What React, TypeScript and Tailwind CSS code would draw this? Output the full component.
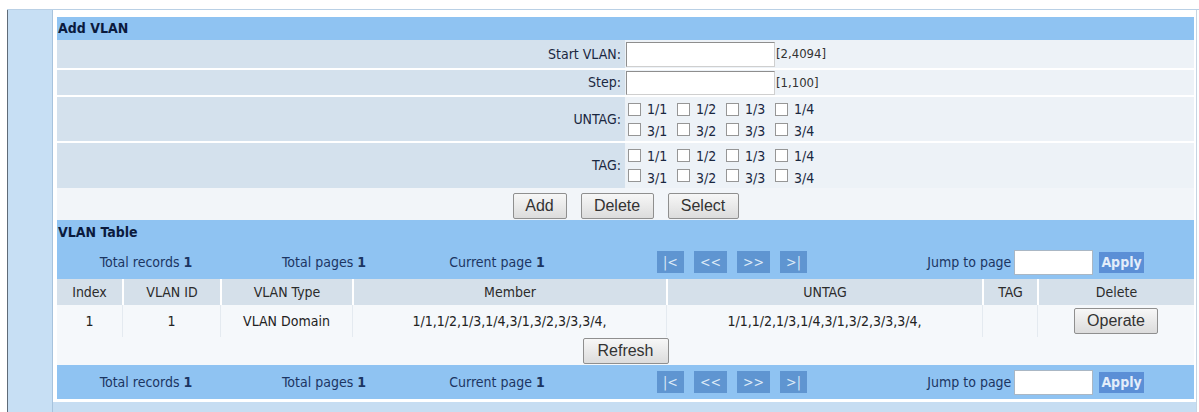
import React from "react";

const ports = [
  ["1/1", "1/2", "1/3", "1/4"],
  ["3/1", "3/2", "3/3", "3/4"],
];

const Btn = ({ label, className = "" }: { label: string; className?: string }) => (
  <button
    className={`flex h-[26px] items-center justify-center rounded-[2px] border border-[#8f8f8f] bg-gradient-to-b from-[#f7f7f7] to-[#dcdcdc] font-['Liberation_Sans',Arial,sans-serif] text-[16px] text-[#333] ${className}`}
  >
    {label}
  </button>
);

const PortBoxes = () => (
  <div className="flex flex-col gap-[2px] pl-[3px] leading-[18px]">
    {ports.map((line, i) => (
      <div key={i} className="flex">
        {line.map((p) => (
          <label key={p} className="flex w-[49px] items-center">
            <span className="h-[13px] w-[13px] border border-[#969696] bg-white" />
            <span className={`ml-[6px] ${i === 1 ? "translate-y-[2px]" : ""}`}>{p}</span>
          </label>
        ))}
      </div>
    ))}
  </div>
);

const Pager = () => (
  <div className="grid h-[34px] grid-cols-[178px_178px_168px_302px_1fr] items-center bg-[#8fc3f2] text-[14px] text-[#1c3562]">
    <div className="text-center">
      Total records <b>1</b>
    </div>
    <div className="text-center">
      Total pages <b>1</b>
    </div>
    <div className="text-center">
      Current page <b>1</b>
    </div>
    <div className="flex justify-center gap-[10px]">
      {[
        ["|<", "w-[27px]"],
        ["<<", "w-[33px]"],
        [">>", "w-[33px]"],
        [">|", "w-[27px]"],
      ].map(([s, w]) => (
        <span key={s} className={`flex h-[22px] ${w} items-center justify-center bg-[#5f95d1] text-[#dce9f7]`}>
          {s}
        </span>
      ))}
    </div>
    <div className="flex items-center justify-center pr-[6px]">
      <span>Jump to page</span>
      <span className="ml-[3px] h-[25px] w-[79px] border border-[#aab7c4] bg-white" />
      <span className="ml-[6px] bg-[#5b8fd6] px-[2px] leading-[21px] font-bold text-[#e3edfa]">Apply</span>
    </div>
  </div>
);

const cols = "grid grid-cols-[65px_98px_132px_314px_316px_55px_1fr]";

export default function App() {
  return (
    <div className="h-[412px] overflow-hidden bg-white pt-[9px] font-['DejaVu_Sans_Condensed','DejaVu_Sans','Liberation_Sans',sans-serif] text-[14px] text-[#1a2740]">
      <div className="ml-[7px] flex h-full border-t border-[#b9d0e5]">
        <div className="w-px bg-[#5f6b78]" />
        <div className="w-[44px] bg-[#c7dff4]" />
        <div className="flex w-[1145px] flex-col border-x border-l-[#a7c3dd] border-r-[#c5d5e3]">
          <div className="bg-white pt-[7px] pr-[2px] pb-[3px] pl-[4px]">
            {/* Add VLAN */}
            <div className="flex h-[23px] items-center bg-[#8fc3f2] pl-[1px] font-bold text-[#0b1a3d]">Add VLAN</div>

            <div className="grid grid-cols-[568px_1fr]">
              <div className="flex h-[30px] items-center justify-end border-b-2 border-white bg-[#d4e1ed] pr-[4px]">Start VLAN:</div>
              <div className="flex h-[30px] items-center border-b-2 border-white bg-[#edf2f7] pl-[1px]">
                <span className="h-[25px] w-[149px] border border-t-[#8e8e8e] border-r-[#cfcfcf] border-b-[#cfcfcf] border-l-[#8e8e8e] bg-white" />
                <span className="ml-[1px] text-[13px] text-[#333]">[2,4094]</span>
              </div>

              <div className="flex h-[27px] items-center justify-end border-b-2 border-white bg-[#d4e1ed] pr-[4px]">Step:</div>
              <div className="flex h-[27px] items-center border-b-2 border-white bg-[#edf2f7] pl-[1px]">
                <span className="h-[24px] w-[149px] border border-t-[#8e8e8e] border-r-[#cfcfcf] border-b-[#cfcfcf] border-l-[#8e8e8e] bg-white" />
                <span className="ml-[1px] text-[13px] text-[#333]">[1,100]</span>
              </div>

              <div className="flex h-[46px] items-center justify-end border-b-2 border-white bg-[#d4e1ed] pr-[4px]">UNTAG:</div>
              <div className="flex h-[46px] items-center border-b-2 border-white bg-[#edf2f7]">
                <PortBoxes />
              </div>

              <div className="flex h-[45px] items-center justify-end bg-[#d4e1ed] pr-[4px]">TAG:</div>
              <div className="flex h-[45px] items-center bg-[#edf2f7]">
                <PortBoxes />
              </div>
            </div>

            <div className="flex h-[32px] items-end justify-center gap-[14px] bg-[#f2f5f9] pb-[1px]">
              <Btn label="Add" className="w-[54px]" />
              <Btn label="Delete" className="w-[73px]" />
              <Btn label="Select" className="w-[71px]" />
            </div>

            {/* VLAN Table */}
            <div className="flex h-[25px] items-center bg-[#8fc3f2] pl-[1px] font-bold text-[#0b1a3d]">VLAN Table</div>
            <Pager />

            <div className={`${cols} h-[26px] items-stretch bg-[#d5e0ea] text-[#2b2b2b]`}>
              {["Index", "VLAN ID", "VLAN Type", "Member", "UNTAG", "TAG", "Delete"].map((h, i) => (
                <div key={h} className={`flex items-center justify-center ${i ? "border-l-2 border-white" : ""}`}>
                  {h}
                </div>
              ))}
            </div>

            <div className={`${cols} h-[32px] items-stretch bg-[#f5f8fb] text-[#222]`}>
              <div className="flex items-center justify-center">1</div>
              <div className="flex items-center justify-center border-l border-[#e4eaf0]">1</div>
              <div className="flex items-center justify-center border-l border-[#e4eaf0]">VLAN Domain</div>
              <div className="flex items-center justify-center border-l border-[#e4eaf0]">1/1,1/2,1/3,1/4,3/1,3/2,3/3,3/4,</div>
              <div className="flex items-center justify-center border-l border-[#e4eaf0]">1/1,1/2,1/3,1/4,3/1,3/2,3/3,3/4,</div>
              <div className="border-l border-[#e4eaf0]" />
              <div className="flex items-center justify-center border-l border-[#e4eaf0]">
                <Btn label="Operate" className="w-[84px]" />
              </div>
            </div>

            <div className="flex h-[28px] items-center justify-center bg-[#f5f8fb]">
              <Btn label="Refresh" className="h-[25px] w-[86px]" />
            </div>

            <Pager />
          </div>
          <div className="flex-1 bg-[#c6ddf2]" />
        </div>
      </div>
    </div>
  );
}
